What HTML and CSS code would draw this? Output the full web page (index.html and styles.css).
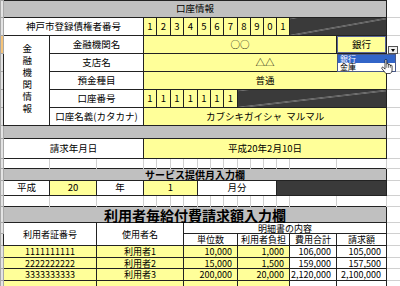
FILE: index.html
```html
<!DOCTYPE html>
<html lang="ja">
<head>
  <meta charset="UTF-8" />
  <title>口座情報</title>
  <link rel="stylesheet" href="styles.css">
</head>
<body>

<table class="sheet">
  <colgroup>
    <col class="c-hd">
    <col class="c-a"><col class="c-b"><col class="c-b">
    <col class="c-13"><col class="c-14"><col class="c-13"><col class="c-14"><col class="c-13"><col class="c-13">
    <col class="c-14"><col class="c-13"><col class="c-13"><col class="c-13"><col class="c-13">
    <col class="c-b"><col class="c-p">
    <col class="c-gl">
  </colgroup>

  <!-- 口座情報 -->
  <tr class="h17">
    <td class="hd"></td>
    <td class="band" colspan="16">口座情報</td>
    <td class="gl"></td>
  </tr>
  <tr class="h18">
    <td class="hd"></td>
    <td colspan="3">神戸市登録債権者番号</td>
    <td class="yl">1</td><td class="yl">2</td><td class="yl">3</td><td class="yl">4</td>
    <td class="yl">5</td><td class="yl">6</td><td class="yl">7</td><td class="yl">8</td>
    <td class="yl">9</td><td class="yl">0</td><td class="yl">1</td>
    <td class="diag" colspan="2"></td>
    <td class="gl"></td>
  </tr>
  <tr class="h18">
    <td class="hd on"></td>
    <td rowspan="5"><span class="vert">金融機関情報</span></td>
    <td colspan="2">金融機関名</td>
    <td class="yl" colspan="12">○○</td>
    <td class="yl sel">銀行
      <div class="dd-btn"></div>
      <div class="dd-list">
        <div class="dd-item active">銀行</div>
        <div class="dd-item">金庫</div>
      </div>
      <svg class="cursor" viewBox="0 0 13.5 17" width="12" height="15">
        <path d="M4.5 1.5 a1 1 0 0 1 2 0 V6 a1 1 0 0 1 2 0 V7 a1 1 0 0 1 2 0 V8 a1 1 0 0 1 2 0 V12.5 c0 2 -1 3 -2 4 H5.5 L1 11 a1 1 0 0 1 1.6 -1.4 L4.5 11.5 Z" fill="#fff" stroke="#000" stroke-width="0.8"/>
        <path d="M6.5 6 V10 M8.5 7 V10 M10.5 8 V10" stroke="#000" stroke-width="0.6"/>
      </svg>
    </td>
    <td class="gl"></td>
  </tr>
  <tr class="h18">
    <td class="hd"></td>
    <td colspan="2">支店名</td>
    <td class="yl" colspan="13">△△</td>
    <td class="gl"></td>
  </tr>
  <tr class="h18">
    <td class="hd"></td>
    <td colspan="2">預金種目</td>
    <td class="yl" colspan="13">普通</td>
    <td class="gl"></td>
  </tr>
  <tr class="h18">
    <td class="hd"></td>
    <td colspan="2">口座番号</td>
    <td class="yl">1</td><td class="yl">1</td><td class="yl">1</td><td class="yl">1</td>
    <td class="yl">1</td><td class="yl">1</td><td class="yl">1</td>
    <td class="diag" colspan="6"></td>
    <td class="gl"></td>
  </tr>
  <tr class="h18">
    <td class="hd"></td>
    <td colspan="2">口座名義(カタカナ)</td>
    <td class="yl" colspan="13">カブシキガイシャ&nbsp;&nbsp;マルマル</td>
    <td class="gl"></td>
  </tr>
  <tr class="h13">
    <td class="hd"></td>
    <td class="band" colspan="16"></td>
    <td class="gl"></td>
  </tr>
  <tr class="h20">
    <td class="hd"></td>
    <td colspan="3">請求年月日</td>
    <td class="yl" colspan="13">平成20年2月10日</td>
    <td class="gl"></td>
  </tr>
  <tr class="h10 blank">
    <td class="hd"></td>
    <td></td><td></td><td></td><td></td><td></td><td></td><td></td><td></td>
    <td></td><td></td><td></td><td></td><td></td><td></td><td></td><td></td>
    <td class="gl"></td>
  </tr>

  <!-- サービス提供月 -->
  <tr class="h12">
    <td class="hd"></td>
    <td class="band sub" colspan="16">サービス提供月入力欄</td>
    <td class="gl"></td>
  </tr>
  <tr class="h15">
    <td class="hd"></td>
    <td>平成</td>
    <td class="yl">20</td>
    <td>年</td>
    <td class="yl" colspan="4">1</td>
    <td colspan="6">月分</td>
    <td class="dk" colspan="3"></td>
    <td class="gl"></td>
  </tr>
  <tr class="h11 blank">
    <td class="hd"></td>
    <td></td><td></td><td></td><td></td><td></td><td></td><td></td><td></td>
    <td></td><td></td><td></td><td></td><td></td><td></td><td></td><td></td>
    <td class="gl"></td>
  </tr>

  <!-- 利用者毎給付費請求額 -->
  <tr class="h16">
    <td class="hd"></td>
    <td class="band title" colspan="16">利用者毎給付費請求額入力欄</td>
    <td class="gl"></td>
  </tr>
  <tr class="h11 tight">
    <td class="hd"></td>
    <td colspan="2" rowspan="2">利用者証番号</td>
    <td colspan="4" rowspan="2">使用者名</td>
    <td colspan="10">明細書の内容</td>
    <td class="gl"></td>
  </tr>
  <tr class="h12 tight">
    <td class="hd"></td>
    <td colspan="4">単位数</td>
    <td colspan="4">利用者負担</td>
    <td>費用合計</td>
    <td>請求額</td>
    <td class="gl"></td>
  </tr>
  <tr class="h12 tight">
    <td class="hd"></td>
    <td class="yl" colspan="2">1111111111</td>
    <td class="yl" colspan="4">利用者1</td>
    <td class="yl num" colspan="4">10,000</td>
    <td class="yl num" colspan="4">1,000</td>
    <td class="num">106,000</td>
    <td class="num">105,000</td>
    <td class="gl"></td>
  </tr>
  <tr class="h11 tight">
    <td class="hd"></td>
    <td class="yl" colspan="2">2222222222</td>
    <td class="yl" colspan="4">利用者2</td>
    <td class="yl num" colspan="4">15,000</td>
    <td class="yl num" colspan="4">1,500</td>
    <td class="num">159,000</td>
    <td class="num">157,500</td>
    <td class="gl"></td>
  </tr>
  <tr class="h12 tight">
    <td class="hd"></td>
    <td class="yl" colspan="2">3333333333</td>
    <td class="yl" colspan="4">利用者3</td>
    <td class="yl num" colspan="4">200,000</td>
    <td class="yl num" colspan="4">20,000</td>
    <td class="num">2,120,000</td>
    <td class="num">2,100,000</td>
    <td class="gl"></td>
  </tr>
  <tr class="h12">
    <td class="hd"></td>
    <td class="yl" colspan="2"></td>
    <td class="yl" colspan="4"></td>
    <td class="yl" colspan="4"></td>
    <td class="yl" colspan="4"></td>
    <td></td>
    <td></td>
    <td class="gl"></td>
  </tr>
</table>

</body>
</html>
```

FILE: styles.css
```css
body {
  margin: 0;
  font-family: "Noto Sans CJK JP", "Noto Sans", sans-serif;
  font-size: 9.5px;
  color: #000;
  background: #fff;
  overflow: hidden;
}

/* Sheet grid */
.sheet {
  border-collapse: collapse;
  table-layout: fixed;
  width: 400px;
}

.c-hd { width: 3px; }
.c-a  { width: 46px; }
.c-b  { width: 47px; }
.c-13 { width: 13px; }
.c-14 { width: 14px; }
.c-p  { width: 50px; }
.c-gl { width: 14px; }

.h10 { height: 10px; }
.h11 { height: 11px; }
.h12 { height: 12px; }
.h13 { height: 13px; }
.h15 { height: 15px; }
.h16 { height: 16px; }
.h17 { height: 17px; }
.h18 { height: 18px; }
.h20 { height: 20px; }

.sheet td {
  padding: 0;
  border: 1px solid #222;
  background: #fff;
  text-align: center;
  vertical-align: middle;
  line-height: 1;
  white-space: nowrap;
}

/* header and data rows are tight, keep text inside its own row */
.tight td {
  font-size: 9px;
  line-height: 9px;
}

/* row header strip at the far left */
.sheet td.hd {
  background: #e4e4e4;
  border-color: #a8a8a8;
}

.sheet td.hd.on {
  background: #f6c47a;
}

/* plain gridline cells */
.sheet td.gl {
  border: 1px solid #d0d0d0;
  border-left-style: none;
  border-top-style: none;
}

.blank td {
  border-top-style: none;
  border-bottom-style: none;
  border-left-color: #d0d0d0;
  border-right-color: #d0d0d0;
}

.sheet td.band { background: #c0c0c0; }
.sheet td.yl   { background: #ffff99; }
.sheet td.dk   { background: #3a3a3a; }

.sheet td.diag {
  background: linear-gradient(to bottom right, #3a3a3a calc(50% - 0.7px), #b0b0b0 50%, #3a3a3a calc(50% + 0.7px));
}

.sub {
  font-weight: bold;
  font-size: 10px;
}

.title {
  font-weight: bold;
  font-size: 14px;
}

.sheet td.num {
  text-align: right;
  padding-right: 5px;
}

.vert {
  display: inline-block;
  writing-mode: vertical-rl;
  letter-spacing: 2.5px;
}

/* dropdown on the selected cell */
.sheet td.sel {
  position: relative;
  box-shadow: inset 0 0 0 1px #5a6698;
}

.dd-btn {
  position: absolute;
  left: 51px;
  top: 10px;
  width: 10px;
  height: 8px;
  box-sizing: border-box;
  background: #f0f0f0;
  border: 1px solid #555;
}

.dd-btn::after {
  content: "";
  position: absolute;
  left: 2px;
  top: 2px;
  border-left: 2.5px solid transparent;
  border-right: 2.5px solid transparent;
  border-top: 3px solid #000;
}

.dd-list {
  position: absolute;
  left: 0;
  top: 18px;
  width: 59px;
  box-sizing: border-box;
  background: #fff;
  border: 1px solid #4a5a8a;
  text-align: left;
}

.dd-item {
  height: 8px;
  line-height: 8px;
  padding-left: 2px;
  font-size: 8px;
}

.dd-item.active {
  background: #3265c8;
  color: #fff;
}

.cursor {
  position: absolute;
  left: 44px;
  top: 23px;
}
```
